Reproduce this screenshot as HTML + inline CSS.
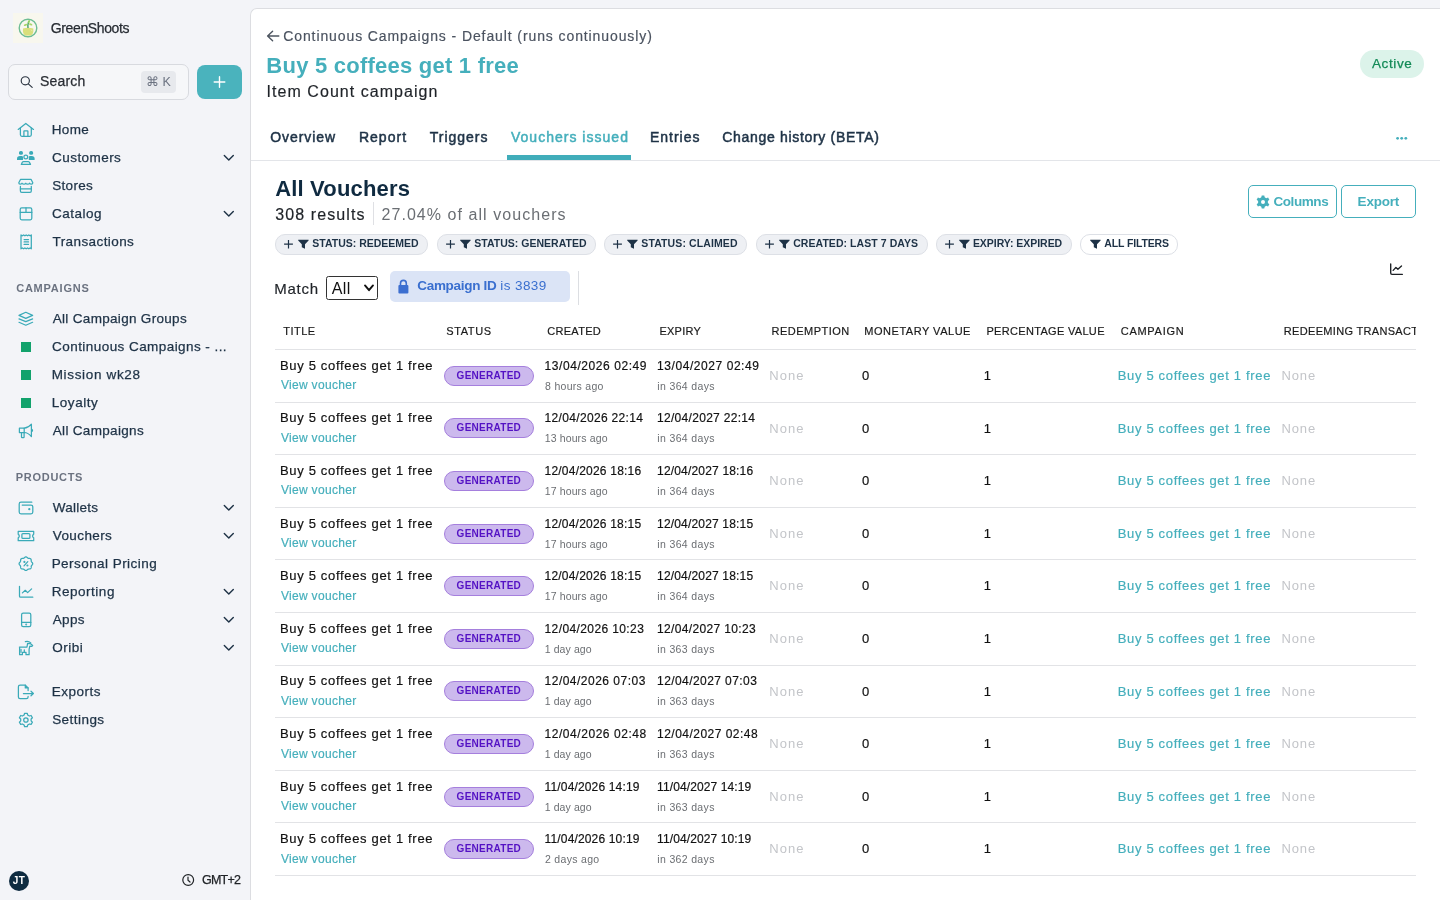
<!DOCTYPE html>
<html><head><meta charset="utf-8"><title>Vouchers issued</title>
<style>
*{box-sizing:border-box;margin:0;padding:0}
html,body{width:1440px;height:900px;overflow:hidden;background:#f3f4f8;font-family:"Liberation Sans",sans-serif}
.t{position:absolute;white-space:nowrap}
.box{position:absolute}
.i{position:absolute;overflow:visible}
.clip{position:absolute;overflow:hidden}
.m{-webkit-text-stroke:0.25px currentColor}
.sb{-webkit-text-stroke:0.5px currentColor}
.m2{-webkit-text-stroke:0.18px currentColor}
.logo{position:absolute;left:13px;top:13px;width:30px;height:30px;background:#f8f7ee}
.logo svg{position:absolute;left:0;top:0}
</style></head><body><div id="root" style="position:absolute;left:0;top:0;width:1440px;height:900px;will-change:transform;background:#f3f4f8">
<div class="logo"><svg width="30" height="30" viewBox="0 0 30 30"><circle cx="15" cy="15" r="8.8" fill="none" stroke="#6dbd92" stroke-width="1.4"/><path d="M10 15.4 Q15 14 20.3 15.4 Q20.9 20.6 17.8 22.6 H12.4 Q9.3 20.6 10 15.4 Z" fill="#d9df7b"/><path d="M15 15 Q14.6 11.5 15.6 8.8" stroke="#3a9a62" stroke-width="1.3" fill="none"/><ellipse cx="12.6" cy="11.9" rx="1.9" ry="1" fill="#a9d66c" transform="rotate(-20 12.6 11.9)"/><ellipse cx="17.7" cy="11.3" rx="1.8" ry="0.95" fill="#a9d66c" transform="rotate(20 17.7 11.3)"/><ellipse cx="15.9" cy="8.7" rx="0.95" ry="1.7" fill="#8fd05e" transform="rotate(25 15.9 8.7)"/><path d="M18 16.6 Q18.8 17.2 19 18.2" stroke="#fff" stroke-width="0.6" fill="none" opacity="0.7"/></svg></div>
<div class="t m" style="left:50.81px;top:21.00px;font-size:14px;line-height:14px;color:#272c33;letter-spacing:-0.381px;">GreenShoots</div>
<div class="box" style="left:8px;top:64px;width:181px;height:36px;border:1px solid #d8dadf;border-radius:7px;background:#f6f7f9"></div>
<svg class="i" style="left:14px;top:70px;" width="24" height="24" viewBox="0 0 24 24"><g fill="none" stroke="#2b3440" stroke-width="1.15" stroke-linecap="round"><circle cx="11.3" cy="10.8" r="4.1"/><path d="M14.3 13.9 L18.2 17.4"/></g></svg>
<div class="t m" style="left:39.98px;top:74.00px;font-size:14px;line-height:14px;color:#2a2e34;letter-spacing:0.177px;">Search</div>
<div class="box" style="left:141px;top:71px;width:35px;height:22px;border-radius:4px;background:#e7e9ed"></div>
<div class="t" style="left:145.95px;top:76.00px;font-size:12.5px;line-height:12.5px;color:#6b7280;">&#8984; K</div>
<div class="box" style="left:197px;top:65px;width:45px;height:34px;border-radius:8px;background:#4ab3bd"></div>
<svg class="i" style="left:207px;top:70px;" width="24" height="24" viewBox="0 0 24 24"><path d="M12.5 6.7 V17.3 M7.2 12 H17.8" stroke="#fff" stroke-width="1.4" stroke-linecap="round"/></svg>
<svg class="i" style="left:14px;top:118px;" width="24" height="24" viewBox="0 0 24 24"><g fill="none" stroke="#3aaab8" stroke-width="1.25" stroke-linecap="round" stroke-linejoin="round"><path d="M4.2 11.4 L11.8 5.4 L19.5 11.4"/><path d="M6.4 10 V16.8 Q6.4 18.3 7.9 18.3 H15.8 Q17.3 18.3 17.3 16.8 V10"/><path d="M9.9 18.3 V13.3 Q9.9 12.9 10.3 12.9 H13.5 Q13.9 12.9 13.9 13.3 V18.3"/></g></svg>
<div class="t m" style="left:51.67px;top:123.00px;font-size:13.5px;line-height:13.5px;color:#1e3246;letter-spacing:0.396px;">Home</div>
<svg class="i" style="left:14px;top:146px;" width="24" height="24" viewBox="0 0 24 24"><g fill="#3aaab8"><rect x="5" y="5" width="3.9" height="3.8" rx="1.6"/><rect x="15.2" y="5" width="3.9" height="3.8" rx="1.6"/><path d="M3 13.9 V12.6 Q3 10.1 6 10.1 H7.6 Q9 10.1 9 11 V13.9 Z"/><path d="M20.6 13.9 V12.6 Q20.6 10.1 17.6 10.1 H16 Q14.8 10.1 14.8 11 V13.9 Z"/></g><g fill="none" stroke="#3aaab8" stroke-width="1.25" stroke-linecap="round" stroke-linejoin="round"><circle cx="11.8" cy="10.9" r="1.9"/><path d="M7.3 18.4 L8.3 16.3 Q8.7 15.6 9.6 15.6 H14.1 Q15 15.6 15.4 16.3 L16.5 18.4 Z"/></g></svg>
<div class="t m" style="left:52.11px;top:151.00px;font-size:13.5px;line-height:13.5px;color:#1e3246;letter-spacing:0.430px;">Customers</div>
<svg class="i" style="left:218px;top:152px;" width="20" height="12" viewBox="0 0 20 12"><path d="M6.3 3.6 L10.8 8.1 L15.3 3.6" fill="none" stroke="#1e3246" stroke-width="1.4" stroke-linecap="round" stroke-linejoin="round"/></svg>
<svg class="i" style="left:14px;top:174px;" width="24" height="24" viewBox="0 0 24 24"><g fill="none" stroke="#3aaab8" stroke-width="1.25" stroke-linecap="round" stroke-linejoin="round"><path d="M6.6 5.3 H17 L18.8 8.8 Q18.8 10.2 17.5 10.2 Q16 10.2 15.6 9.2 Q15 10.2 13.6 10.2 Q12.3 10.2 11.8 9.2 Q11.3 10.2 10 10.2 Q8.6 10.2 8 9.2 Q7.5 10.2 6.1 10.2 Q4.8 10.2 4.8 8.8 Z"/><path d="M6.4 12.4 V17.1 Q6.4 18.4 7.7 18.4 H16 Q17.3 18.4 17.3 17.1 V12.4"/><path d="M6.4 14.9 H17.3"/></g></svg>
<div class="t m" style="left:52.17px;top:179.00px;font-size:13.5px;line-height:13.5px;color:#1e3246;letter-spacing:0.325px;">Stores</div>
<svg class="i" style="left:14px;top:202px;" width="24" height="24" viewBox="0 0 24 24"><g fill="none" stroke="#3aaab8" stroke-width="1.25" stroke-linecap="round" stroke-linejoin="round"><rect x="6.2" y="5.9" width="11.6" height="11.9" rx="1.5"/><path d="M6.2 10.4 H17.8 M12 5.9 V10.4"/></g></svg>
<div class="t m" style="left:52.11px;top:207.00px;font-size:13.5px;line-height:13.5px;color:#1e3246;letter-spacing:0.460px;">Catalog</div>
<svg class="i" style="left:218px;top:208px;" width="20" height="12" viewBox="0 0 20 12"><path d="M6.3 3.6 L10.8 8.1 L15.3 3.6" fill="none" stroke="#1e3246" stroke-width="1.4" stroke-linecap="round" stroke-linejoin="round"/></svg>
<svg class="i" style="left:14px;top:230px;" width="24" height="24" viewBox="0 0 24 24"><g fill="none" stroke="#3aaab8" stroke-width="1.25" stroke-linecap="round" stroke-linejoin="round"><path d="M7 4.9 L8.3 5.8 L9.6 4.9 L10.9 5.8 L12.2 4.9 L13.5 5.8 L14.8 4.9 L16.1 5.8 L17.3 4.9 V18.8 L16.1 17.9 L14.8 18.8 L13.5 17.9 L12.2 18.8 L10.9 17.9 L9.6 18.8 L8.3 17.9 L7 18.8 Z"/><path d="M10.1 9.6 H14.5 M10.1 11.9 H14.5 M10.1 14.4 H14.5"/></g></svg>
<div class="t m" style="left:52.49px;top:235.00px;font-size:13.5px;line-height:13.5px;color:#1e3246;letter-spacing:0.415px;">Transactions</div>
<svg class="i" style="left:14px;top:306px;" width="24" height="24" viewBox="0 0 24 24"><g fill="none" stroke="#3aaab8" stroke-width="1.25" stroke-linecap="round" stroke-linejoin="round"><path d="M11.8 6.3 L18.6 9.4 L11.8 12.4 L5 9.4 Z"/><path d="M5 12.9 L11.8 15.6 L18.6 12.9"/><path d="M5 16.3 L11.8 19.2 L18.6 16.3"/></g></svg>
<div class="t m" style="left:52.74px;top:312.00px;font-size:13.5px;line-height:13.5px;color:#1e3246;letter-spacing:0.314px;">All Campaign Groups</div>
<div class="box" style="left:21px;top:342px;width:10px;height:10px;background:#12a26c"></div>
<div class="t m" style="left:52.11px;top:340.00px;font-size:13.5px;line-height:13.5px;color:#1e3246;letter-spacing:0.435px;">Continuous Campaigns - ...</div>
<div class="box" style="left:21px;top:370px;width:10px;height:10px;background:#12a26c"></div>
<div class="t m" style="left:51.67px;top:368.00px;font-size:13.5px;line-height:13.5px;color:#1e3246;letter-spacing:0.663px;">Mission wk28</div>
<div class="box" style="left:21px;top:398px;width:10px;height:10px;background:#12a26c"></div>
<div class="t m" style="left:51.67px;top:396.00px;font-size:13.5px;line-height:13.5px;color:#1e3246;letter-spacing:0.573px;">Loyalty</div>
<svg class="i" style="left:14px;top:418px;" width="24" height="24" viewBox="0 0 24 24"><g fill="none" stroke="#3aaab8" stroke-width="1.25" stroke-linecap="round" stroke-linejoin="round"><path d="M5.4 10.2 H10.2 Q14.2 10 17.4 6.2 V18.6 Q14.2 14.7 10.2 14.5 H5.4 Z"/><path d="M10.2 10.2 V14.5"/><path d="M7.5 14.5 V18.9 Q7.5 19.5 8.1 19.5 H9.5 Q10.1 19.5 10.1 18.9 V14.5"/><path d="M18 11.5 Q19 12.4 18 13.3"/></g></svg>
<div class="t m" style="left:52.74px;top:424.00px;font-size:13.5px;line-height:13.5px;color:#1e3246;letter-spacing:0.325px;">All Campaigns</div>
<svg class="i" style="left:14px;top:495px;" width="24" height="24" viewBox="0 0 24 24"><g fill="none" stroke="#3aaab8" stroke-width="1.25" stroke-linecap="round" stroke-linejoin="round"><path d="M17.8 7.2 H7 Q5.2 7.2 5.2 9 V17 Q5.2 18.8 7 18.8 H17 Q18.8 18.8 18.8 17 V11.8 Q18.8 10.1 17 10.1 H8.2"/><circle cx="15.3" cy="14.2" r="0.5" fill="#3aaab8"/></g></svg>
<div class="t m" style="left:52.74px;top:501.00px;font-size:13.5px;line-height:13.5px;color:#1e3246;letter-spacing:0.269px;">Wallets</div>
<svg class="i" style="left:218px;top:502px;" width="20" height="12" viewBox="0 0 20 12"><path d="M6.3 3.6 L10.8 8.1 L15.3 3.6" fill="none" stroke="#1e3246" stroke-width="1.4" stroke-linecap="round" stroke-linejoin="round"/></svg>
<svg class="i" style="left:14px;top:523px;" width="24" height="24" viewBox="0 0 24 24"><g fill="none" stroke="#3aaab8" stroke-width="1.25" stroke-linecap="round" stroke-linejoin="round"><path d="M4.2 8.4 H19.7 V11.3 Q18.6 11.7 18.6 13 Q18.6 14.3 19.7 14.8 V17.7 H4.2 V14.8 Q5.3 14.3 5.3 13 Q5.3 11.7 4.2 11.3 Z"/><rect x="7.9" y="10.5" width="8" height="4.9" rx="1"/></g></svg>
<div class="t m" style="left:52.74px;top:529.00px;font-size:13.5px;line-height:13.5px;color:#1e3246;letter-spacing:0.407px;">Vouchers</div>
<svg class="i" style="left:218px;top:530px;" width="20" height="12" viewBox="0 0 20 12"><path d="M6.3 3.6 L10.8 8.1 L15.3 3.6" fill="none" stroke="#1e3246" stroke-width="1.4" stroke-linecap="round" stroke-linejoin="round"/></svg>
<svg class="i" style="left:14px;top:551px;" width="24" height="24" viewBox="0 0 24 24"><g fill="none" stroke="#3aaab8" stroke-width="1.25" stroke-linecap="round" stroke-linejoin="round"><path d="M11.90 5.90 L12.08 5.91 L12.25 5.95 L12.43 6.01 L12.60 6.09 L12.76 6.18 L12.92 6.29 L13.07 6.41 L13.21 6.53 L13.35 6.66 L13.49 6.78 L13.62 6.90 L13.75 7.01 L13.88 7.10 L14.02 7.18 L14.16 7.25 L14.30 7.30 L14.46 7.34 L14.62 7.37 L14.79 7.38 L14.96 7.40 L15.15 7.40 L15.33 7.41 L15.52 7.43 L15.71 7.45 L15.90 7.48 L16.09 7.53 L16.26 7.59 L16.42 7.68 L16.57 7.77 L16.71 7.89 L16.83 8.03 L16.92 8.18 L17.01 8.34 L17.07 8.51 L17.12 8.70 L17.15 8.89 L17.17 9.08 L17.19 9.27 L17.20 9.45 L17.20 9.64 L17.22 9.81 L17.23 9.98 L17.26 10.14 L17.30 10.30 L17.35 10.44 L17.42 10.58 L17.50 10.72 L17.59 10.85 L17.70 10.98 L17.82 11.11 L17.94 11.25 L18.07 11.39 L18.19 11.53 L18.31 11.68 L18.42 11.84 L18.51 12.00 L18.59 12.17 L18.65 12.35 L18.69 12.52 L18.70 12.70 L18.69 12.88 L18.65 13.05 L18.59 13.23 L18.51 13.40 L18.42 13.56 L18.31 13.72 L18.19 13.87 L18.07 14.01 L17.94 14.15 L17.82 14.29 L17.70 14.42 L17.59 14.55 L17.50 14.68 L17.42 14.82 L17.35 14.96 L17.30 15.10 L17.26 15.26 L17.23 15.42 L17.22 15.59 L17.20 15.76 L17.20 15.95 L17.19 16.13 L17.17 16.32 L17.15 16.51 L17.12 16.70 L17.07 16.89 L17.01 17.06 L16.92 17.22 L16.83 17.37 L16.71 17.51 L16.57 17.63 L16.42 17.72 L16.26 17.81 L16.09 17.87 L15.90 17.92 L15.71 17.95 L15.52 17.97 L15.33 17.99 L15.15 18.00 L14.96 18.00 L14.79 18.02 L14.62 18.03 L14.46 18.06 L14.30 18.10 L14.16 18.15 L14.02 18.22 L13.88 18.30 L13.75 18.39 L13.62 18.50 L13.49 18.62 L13.35 18.74 L13.21 18.87 L13.07 18.99 L12.92 19.11 L12.76 19.22 L12.60 19.31 L12.43 19.39 L12.25 19.45 L12.08 19.49 L11.90 19.50 L11.72 19.49 L11.55 19.45 L11.37 19.39 L11.20 19.31 L11.04 19.22 L10.88 19.11 L10.73 18.99 L10.59 18.87 L10.45 18.74 L10.31 18.62 L10.18 18.50 L10.05 18.39 L9.92 18.30 L9.78 18.22 L9.64 18.15 L9.50 18.10 L9.34 18.06 L9.18 18.03 L9.01 18.02 L8.84 18.00 L8.65 18.00 L8.47 17.99 L8.28 17.97 L8.09 17.95 L7.90 17.92 L7.71 17.87 L7.54 17.81 L7.38 17.72 L7.23 17.63 L7.09 17.51 L6.97 17.37 L6.88 17.22 L6.79 17.06 L6.73 16.89 L6.68 16.70 L6.65 16.51 L6.63 16.32 L6.61 16.13 L6.60 15.95 L6.60 15.76 L6.58 15.59 L6.57 15.42 L6.54 15.26 L6.50 15.10 L6.45 14.96 L6.38 14.82 L6.30 14.68 L6.21 14.55 L6.10 14.42 L5.98 14.29 L5.86 14.15 L5.73 14.01 L5.61 13.87 L5.49 13.72 L5.38 13.56 L5.29 13.40 L5.21 13.23 L5.15 13.05 L5.11 12.88 L5.10 12.70 L5.11 12.52 L5.15 12.35 L5.21 12.17 L5.29 12.00 L5.38 11.84 L5.49 11.68 L5.61 11.53 L5.73 11.39 L5.86 11.25 L5.98 11.11 L6.10 10.98 L6.21 10.85 L6.30 10.72 L6.38 10.58 L6.45 10.44 L6.50 10.30 L6.54 10.14 L6.57 9.98 L6.58 9.81 L6.60 9.64 L6.60 9.45 L6.61 9.27 L6.63 9.08 L6.65 8.89 L6.68 8.70 L6.73 8.51 L6.79 8.34 L6.88 8.18 L6.97 8.03 L7.09 7.89 L7.23 7.77 L7.38 7.68 L7.54 7.59 L7.71 7.53 L7.90 7.48 L8.09 7.45 L8.28 7.43 L8.47 7.41 L8.65 7.40 L8.84 7.40 L9.01 7.38 L9.18 7.37 L9.34 7.34 L9.50 7.30 L9.64 7.25 L9.78 7.18 L9.92 7.10 L10.05 7.01 L10.18 6.90 L10.31 6.78 L10.45 6.66 L10.59 6.53 L10.73 6.41 L10.88 6.29 L11.04 6.18 L11.20 6.09 L11.37 6.01 L11.55 5.95 L11.72 5.91 L11.90 5.90Z"/><path d="M10 14.8 L13.8 10.6"/><circle cx="10.4" cy="10.9" r="0.45" fill="#3aaab8"/><circle cx="13.4" cy="14.5" r="0.45" fill="#3aaab8"/></g></svg>
<div class="t m" style="left:51.67px;top:557.00px;font-size:13.5px;line-height:13.5px;color:#1e3246;letter-spacing:0.446px;">Personal Pricing</div>
<svg class="i" style="left:14px;top:579px;" width="24" height="24" viewBox="0 0 24 24"><g fill="none" stroke="#3aaab8" stroke-width="1.25" stroke-linecap="round" stroke-linejoin="round"><path d="M5.5 7.3 V17.2 Q5.5 18.2 6.5 18.2 H18.8"/><path d="M8.4 13.9 L11.3 11.3 L13.6 13.6 L17.6 9.9"/></g></svg>
<div class="t m" style="left:51.67px;top:585.00px;font-size:13.5px;line-height:13.5px;color:#1e3246;letter-spacing:0.525px;">Reporting</div>
<svg class="i" style="left:218px;top:586px;" width="20" height="12" viewBox="0 0 20 12"><path d="M6.3 3.6 L10.8 8.1 L15.3 3.6" fill="none" stroke="#1e3246" stroke-width="1.4" stroke-linecap="round" stroke-linejoin="round"/></svg>
<svg class="i" style="left:14px;top:607px;" width="24" height="24" viewBox="0 0 24 24"><g fill="none" stroke="#3aaab8" stroke-width="1.25" stroke-linecap="round" stroke-linejoin="round"><rect x="7.6" y="6.1" width="9.2" height="13.6" rx="1.6"/><path d="M7.6 15.4 H16.8"/><circle cx="12.2" cy="17.5" r="0.35" fill="#3aaab8"/></g></svg>
<div class="t m" style="left:52.74px;top:613.00px;font-size:13.5px;line-height:13.5px;color:#1e3246;letter-spacing:0.371px;">Apps</div>
<svg class="i" style="left:218px;top:614px;" width="20" height="12" viewBox="0 0 20 12"><path d="M6.3 3.6 L10.8 8.1 L15.3 3.6" fill="none" stroke="#1e3246" stroke-width="1.4" stroke-linecap="round" stroke-linejoin="round"/></svg>
<svg class="i" style="left:14px;top:635px;" width="24" height="24" viewBox="0 0 24 24"><g fill="none" stroke="#3aaab8" stroke-width="1.25" stroke-linecap="round" stroke-linejoin="round"><path d="M11.4 6.7 Q14.2 5.6 16.8 7.9"/><path d="M5.4 12 H13 L13.6 8.4 L16.2 8.6 L18.7 10.4 L17.9 11.3 L15.8 11.2 L15.1 14.3 V19.7 H12 V17.3 H8.4 V19.7 H5.6 V12"/><path d="M7 14.3 V17.3 M10.3 14.8 V17.3"/></g></svg>
<div class="t m" style="left:52.17px;top:641.00px;font-size:13.5px;line-height:13.5px;color:#1e3246;letter-spacing:0.550px;">Oribi</div>
<svg class="i" style="left:218px;top:642px;" width="20" height="12" viewBox="0 0 20 12"><path d="M6.3 3.6 L10.8 8.1 L15.3 3.6" fill="none" stroke="#1e3246" stroke-width="1.4" stroke-linecap="round" stroke-linejoin="round"/></svg>
<svg class="i" style="left:14px;top:679px;" width="24" height="24" viewBox="0 0 24 24"><g fill="none" stroke="#3aaab8" stroke-width="1.25" stroke-linecap="round" stroke-linejoin="round"><path d="M14.1 11.5 V8.9 L11.3 6.1 H6.1 Q4.4 6.1 4.4 7.8 V18 Q4.4 19.7 6.1 19.7 H12.4 Q14.1 19.7 14.1 18 V17.4"/><path d="M11.3 6.1 V8.9 H14.1" fill="#3aaab8"/><path d="M9.4 14.5 H19.4 M17 12.2 L19.4 14.5 L17 16.8"/></g></svg>
<div class="t m" style="left:51.67px;top:685.00px;font-size:13.5px;line-height:13.5px;color:#1e3246;letter-spacing:0.513px;">Exports</div>
<svg class="i" style="left:14px;top:707px;" width="24" height="24" viewBox="0 0 24 24"><g fill="none" stroke="#3aaab8" stroke-width="1.25" stroke-linecap="round" stroke-linejoin="round"><path d="M10.6 6.3 H13.2 L13.7 8 L15.4 9 L17.1 8.5 L18.4 10.8 L17.1 12 V13.9 L18.4 15.2 L17.1 17.4 L15.4 17 L13.7 18 L13.2 19.7 H10.6 L10.1 18 L8.4 17 L6.7 17.4 L5.4 15.2 L6.7 13.9 V12 L5.4 10.8 L6.7 8.5 L8.4 9 L10.1 8 Z"/><circle cx="11.9" cy="13" r="2.2"/></g></svg>
<div class="t m" style="left:52.17px;top:713.00px;font-size:13.5px;line-height:13.5px;color:#1e3246;letter-spacing:0.454px;">Settings</div>
<div class="t" style="left:16.16px;top:283.00px;font-size:11px;line-height:11px;font-weight:bold;color:#6b7280;letter-spacing:0.780px;">CAMPAIGNS</div>
<div class="t" style="left:15.85px;top:472.00px;font-size:11px;line-height:11px;font-weight:bold;color:#6b7280;letter-spacing:0.691px;">PRODUCTS</div>
<div class="box" style="left:9px;top:871px;width:20px;height:20px;border-radius:50%;background:#0e2b40"></div>
<div class="t" style="left:12.81px;top:876.00px;font-size:10px;line-height:10px;font-weight:bold;color:#fff;letter-spacing:0.325px;">JT</div>
<svg class="i" style="left:176px;top:868px;" width="24" height="24" viewBox="0 0 24 24"><g fill="none" stroke="#202327" stroke-width="1.2" stroke-linecap="round"><circle cx="12.2" cy="12" r="5.4"/><path d="M12 9 V12.2 L14 14"/></g></svg>
<div class="t m" style="left:201.88px;top:874.00px;font-size:12.5px;line-height:12.5px;color:#202327;letter-spacing:-0.712px;">GMT+2</div>
<div class="box" style="left:250px;top:8px;width:1200px;height:900px;background:#fff;border-left:1px solid #dcdde1;border-top:1px solid #dcdde1;border-top-left-radius:7px"></div>
<svg class="i" style="left:264px;top:28px;" width="18" height="16" viewBox="0 0 18 16"><path d="M14.8 8 H3.6 M8.6 3.2 L3.6 8 L8.6 12.8" fill="none" stroke="#4d5560" stroke-width="1.4" stroke-linecap="round" stroke-linejoin="round"/></svg>
<div class="t m2" style="left:283.21px;top:29.00px;font-size:14px;line-height:14px;color:#4b5360;letter-spacing:0.901px;">Continuous Campaigns - Default (runs continuously)</div>
<div class="t" style="left:266.36px;top:55.00px;font-size:22px;line-height:22px;font-weight:bold;color:#45afbc;letter-spacing:0.234px;">Buy 5 coffees get 1 free</div>
<div class="t m2" style="left:266.60px;top:84.00px;font-size:16px;line-height:16px;color:#1f2328;letter-spacing:1.041px;">Item Count campaign</div>
<div class="box" style="left:1360px;top:50px;width:64px;height:28px;border-radius:14px;background:#dcf3ea"></div>
<div class="t m" style="left:1371.94px;top:57.00px;font-size:13.5px;line-height:13.5px;color:#138a57;letter-spacing:0.635px;">Active</div>
<div class="t sb" style="left:270.31px;top:130.00px;font-size:14px;line-height:14px;color:#1e3246;letter-spacing:0.930px;">Overview</div>
<div class="t sb" style="left:358.88px;top:130.00px;font-size:14px;line-height:14px;color:#1e3246;letter-spacing:1.038px;">Report</div>
<div class="t sb" style="left:429.69px;top:130.00px;font-size:14px;line-height:14px;color:#1e3246;letter-spacing:1.000px;">Triggers</div>
<div class="t sb" style="left:510.94px;top:130.00px;font-size:14px;line-height:14px;color:#45afbc;letter-spacing:1.018px;">Vouchers issued</div>
<div class="t sb" style="left:649.88px;top:130.00px;font-size:14px;line-height:14px;color:#1e3246;letter-spacing:1.010px;">Entries</div>
<div class="t sb" style="left:722.31px;top:130.00px;font-size:14px;line-height:14px;color:#1e3246;letter-spacing:0.681px;">Change history (BETA)</div>
<div class="box" style="left:507px;top:155px;width:124px;height:5px;background:#40adba"></div>
<div class="box" style="left:251px;top:160px;width:1189px;height:1px;background:#e3e5e9"></div>
<svg class="i" style="left:1390px;top:131px;" width="22" height="14" viewBox="0 0 22 14"><g fill="#45afbc"><circle cx="7.6" cy="7.3" r="1.4"/><circle cx="11.7" cy="7.3" r="1.4"/><circle cx="15.8" cy="7.3" r="1.4"/></g></svg>
<div class="t" style="left:275.14px;top:178.00px;font-size:22px;line-height:22px;font-weight:bold;color:#0f2a40;letter-spacing:0.175px;">All Vouchers</div>
<div class="t m2" style="left:275.18px;top:207.00px;font-size:16px;line-height:16px;color:#1f2328;letter-spacing:1.104px;">308 results</div>
<div class="box" style="left:373px;top:202px;width:1px;height:23px;background:#dfe0e4"></div>
<div class="t" style="left:381.49px;top:207.00px;font-size:16px;line-height:16px;color:#6a6e73;letter-spacing:1.057px;">27.04% of all vouchers</div>
<div class="box" style="left:275px;top:234px;width:153.0px;height:21px;border:1px solid #dde0e6;border-radius:10px;background:#eef0f4"></div>
<svg class="i" style="left:283px;top:237px;" width="12" height="14" viewBox="0 0 12 14"><path d="M5.5 2.9 V11.5 M1.1 7.2 H9.9" stroke="#1e3246" stroke-width="1.2"/></svg>
<svg class="i" style="left:297.7px;top:237px;" width="12" height="14" viewBox="0 0 12 14"><path d="M0.2 2.7 H10.6 V3.5 L7 7.3 V11.8 L3.8 10.3 V7.3 L0.2 3.5 Z" fill="#1e3246"/></svg>
<div class="t" style="left:312.29px;top:238.00px;font-size:10.5px;line-height:10.5px;font-weight:bold;color:#1e3246;">STATUS: REDEEMED</div>
<div class="box" style="left:437px;top:234px;width:159.0px;height:21px;border:1px solid #dde0e6;border-radius:10px;background:#eef0f4"></div>
<svg class="i" style="left:445px;top:237px;" width="12" height="14" viewBox="0 0 12 14"><path d="M5.5 2.9 V11.5 M1.1 7.2 H9.9" stroke="#1e3246" stroke-width="1.2"/></svg>
<svg class="i" style="left:459.7px;top:237px;" width="12" height="14" viewBox="0 0 12 14"><path d="M0.2 2.7 H10.6 V3.5 L7 7.3 V11.8 L3.8 10.3 V7.3 L0.2 3.5 Z" fill="#1e3246"/></svg>
<div class="t" style="left:474.29px;top:238.00px;font-size:10.5px;line-height:10.5px;font-weight:bold;color:#1e3246;letter-spacing:0.016px;">STATUS: GENERATED</div>
<div class="box" style="left:604px;top:234px;width:143.0px;height:21px;border:1px solid #dde0e6;border-radius:10px;background:#eef0f4"></div>
<svg class="i" style="left:612px;top:237px;" width="12" height="14" viewBox="0 0 12 14"><path d="M5.5 2.9 V11.5 M1.1 7.2 H9.9" stroke="#1e3246" stroke-width="1.2"/></svg>
<svg class="i" style="left:626.7px;top:237px;" width="12" height="14" viewBox="0 0 12 14"><path d="M0.2 2.7 H10.6 V3.5 L7 7.3 V11.8 L3.8 10.3 V7.3 L0.2 3.5 Z" fill="#1e3246"/></svg>
<div class="t" style="left:641.29px;top:238.00px;font-size:10.5px;line-height:10.5px;font-weight:bold;color:#1e3246;letter-spacing:0.112px;">STATUS: CLAIMED</div>
<div class="box" style="left:756px;top:234px;width:171.6px;height:21px;border:1px solid #dde0e6;border-radius:10px;background:#eef0f4"></div>
<svg class="i" style="left:764px;top:237px;" width="12" height="14" viewBox="0 0 12 14"><path d="M5.5 2.9 V11.5 M1.1 7.2 H9.9" stroke="#1e3246" stroke-width="1.2"/></svg>
<svg class="i" style="left:778.7px;top:237px;" width="12" height="14" viewBox="0 0 12 14"><path d="M0.2 2.7 H10.6 V3.5 L7 7.3 V11.8 L3.8 10.3 V7.3 L0.2 3.5 Z" fill="#1e3246"/></svg>
<div class="t" style="left:793.16px;top:238.00px;font-size:10.5px;line-height:10.5px;font-weight:bold;color:#1e3246;letter-spacing:0.064px;">CREATED: LAST 7 DAYS</div>
<div class="box" style="left:936px;top:234px;width:135.6px;height:21px;border:1px solid #dde0e6;border-radius:10px;background:#eef0f4"></div>
<svg class="i" style="left:944px;top:237px;" width="12" height="14" viewBox="0 0 12 14"><path d="M5.5 2.9 V11.5 M1.1 7.2 H9.9" stroke="#1e3246" stroke-width="1.2"/></svg>
<svg class="i" style="left:958.7px;top:237px;" width="12" height="14" viewBox="0 0 12 14"><path d="M0.2 2.7 H10.6 V3.5 L7 7.3 V11.8 L3.8 10.3 V7.3 L0.2 3.5 Z" fill="#1e3246"/></svg>
<div class="t" style="left:972.91px;top:238.00px;font-size:10.5px;line-height:10.5px;font-weight:bold;color:#1e3246;letter-spacing:-0.042px;">EXPIRY: EXPIRED</div>
<div class="box" style="left:1080.3px;top:234px;width:98.2px;height:21px;border:1px solid #dde0e6;border-radius:10px;background:#fff"></div>
<svg class="i" style="left:1089.7px;top:237px;" width="12" height="14" viewBox="0 0 12 14"><path d="M0.2 2.7 H10.6 V3.5 L7 7.3 V11.8 L3.8 10.3 V7.3 L0.2 3.5 Z" fill="#1e3246"/></svg>
<div class="t" style="left:1104.35px;top:238.00px;font-size:10.5px;line-height:10.5px;font-weight:bold;color:#1e3246;letter-spacing:-0.150px;">ALL FILTERS</div>
<div class="box" style="left:1248px;top:185px;width:89px;height:33px;border:1px solid #45afbc;border-radius:5px"></div>
<svg class="i" style="left:1255px;top:193.5px;" width="16" height="16" viewBox="0 0 16 16"><g fill="#45afbc" transform="translate(8 8) scale(1.06) translate(-8 -8)"><path d="M6.8 1.8 H9.2 L9.6 3.6 L11 4.4 L12.8 3.8 L14 5.9 L12.6 7.1 V8.9 L14 10.1 L12.8 12.2 L11 11.6 L9.6 12.4 L9.2 14.2 H6.8 L6.4 12.4 L5 11.6 L3.2 12.2 L2 10.1 L3.4 8.9 V7.1 L2 5.9 L3.2 3.8 L5 4.4 L6.4 3.6 Z"/></g><circle cx="8" cy="8" r="2" fill="#fff"/></svg>
<div class="t" style="left:1273.44px;top:195.00px;font-size:13.5px;line-height:13.5px;font-weight:bold;color:#45afbc;letter-spacing:-0.421px;">Columns</div>
<div class="box" style="left:1341px;top:185px;width:75px;height:33px;border:1px solid #45afbc;border-radius:5px"></div>
<div class="t" style="left:1357.62px;top:195.00px;font-size:13.5px;line-height:13.5px;font-weight:bold;color:#45afbc;letter-spacing:-0.237px;">Export</div>
<svg class="i" style="left:1386px;top:259px;" width="20" height="20" viewBox="0 0 20 20"><g fill="none" stroke="#1b1f24" stroke-width="1.35" stroke-linecap="round" stroke-linejoin="round"><path d="M4.7 5 V14 Q4.7 15.3 6 15.3 H16.4"/><path d="M7.2 11.4 L9.9 8.4 L11.9 10.3 L15.5 7"/></g></svg>
<div class="t m2" style="left:274.35px;top:281.00px;font-size:15px;line-height:15px;color:#1f2328;letter-spacing:0.719px;">Match</div>
<div class="box" style="left:326px;top:276px;width:52px;height:24px;border:1px solid #333;border-radius:2.5px;background:#fff"></div>
<div class="t" style="left:331.74px;top:281.00px;font-size:16px;line-height:16px;color:#111;letter-spacing:0.406px;">All</div>
<svg class="i" style="left:363px;top:282px;" width="12" height="12" viewBox="0 0 12 12"><path d="M2 3.4 L6 8.2 L10 3.4" fill="none" stroke="#111" stroke-width="1.9" stroke-linecap="round" stroke-linejoin="round"/></svg>
<div class="box" style="left:390px;top:271px;width:180px;height:31px;border-radius:5px;background:#dbe4f6"></div>
<svg class="i" style="left:395px;top:277px;" width="16" height="18" viewBox="0 0 16 18"><g fill="#3c6fd0"><rect x="3.4" y="8" width="10" height="8.4" rx="1"/><path d="M5.5 8.2 V6.2 Q5.5 3.4 8.4 3.4 Q11.3 3.4 11.3 6.2 V8.2" fill="none" stroke="#3c6fd0" stroke-width="1.6"/></g></svg>
<div class="t" style="left:417.24px;top:279.00px;font-size:13.5px;line-height:13.5px;font-weight:bold;color:#3a6fcf;letter-spacing:-0.298px;">Campaign ID</div>
<div class="t" style="left:500.23px;top:279.00px;font-size:13.5px;line-height:13.5px;color:#3a6fcf;letter-spacing:0.417px;">is 3839</div>
<div class="box" style="left:578px;top:271px;width:1px;height:34px;background:#dcdee2"></div>
<div class="t m2" style="left:283.25px;top:326.00px;font-size:11px;line-height:11px;color:#1a1a1a;letter-spacing:0.487px;">TITLE</div>
<div class="t m2" style="left:446.30px;top:326.00px;font-size:11px;line-height:11px;color:#1a1a1a;letter-spacing:0.590px;">STATUS</div>
<div class="t m2" style="left:547.14px;top:326.00px;font-size:11px;line-height:11px;color:#1a1a1a;letter-spacing:0.319px;">CREATED</div>
<div class="t m2" style="left:659.42px;top:326.00px;font-size:11px;line-height:11px;color:#1a1a1a;letter-spacing:0.260px;">EXPIRY</div>
<div class="t m2" style="left:771.62px;top:326.00px;font-size:11px;line-height:11px;color:#1a1a1a;letter-spacing:0.471px;">REDEMPTION</div>
<div class="t m2" style="left:864.33px;top:326.00px;font-size:11px;line-height:11px;color:#1a1a1a;letter-spacing:0.513px;">MONETARY VALUE</div>
<div class="t m2" style="left:986.42px;top:326.00px;font-size:11px;line-height:11px;color:#1a1a1a;letter-spacing:0.318px;">PERCENTAGE VALUE</div>
<div class="t m2" style="left:1120.74px;top:326.00px;font-size:11px;line-height:11px;color:#1a1a1a;letter-spacing:0.723px;">CAMPAIGN</div>
<div class="clip" style="left:1270px;top:320px;width:146px;height:20px"><div class="t m2" style="left:13.82px;top:6.00px;font-size:11px;line-height:11px;color:#1a1a1a;letter-spacing:0.320px;">REDEEMING TRANSACTION</div></div>
<div class="box" style="left:275px;top:349px;width:1141px;height:1px;background:#e2e3e6"></div>
<div class="t m2" style="left:279.94px;top:359.00px;font-size:13px;line-height:13px;color:#111;letter-spacing:0.674px;">Buy 5 coffees get 1 free</div>
<div class="t m2" style="left:280.94px;top:379.00px;font-size:12px;line-height:12px;color:#45afbc;letter-spacing:0.312px;">View voucher</div>
<div class="box" style="left:444px;top:366px;width:90px;height:20px;border:1px solid #a57fdd;border-radius:10px;background:#ccb9ed"></div>
<div class="t" style="left:456.62px;top:371.00px;font-size:10px;line-height:10px;font-weight:bold;color:#5412c4;letter-spacing:0.269px;">GENERATED</div>
<div class="t m2" style="left:544.56px;top:360.00px;font-size:12px;line-height:12px;color:#111;letter-spacing:0.571px;">13/04/2026 02:49</div>
<div class="t" style="left:545.06px;top:381.00px;font-size:10.5px;line-height:10.5px;color:#6b6e72;letter-spacing:0.294px;">8 hours ago</div>
<div class="t m2" style="left:657.06px;top:360.00px;font-size:12px;line-height:12px;color:#111;letter-spacing:0.564px;">13/04/2027 02:49</div>
<div class="t" style="left:657.31px;top:381.00px;font-size:10.5px;line-height:10.5px;color:#6b6e72;letter-spacing:0.358px;">in 364 days</div>
<div class="t" style="left:769.24px;top:369.00px;font-size:13px;line-height:13px;color:#c3c5c9;letter-spacing:1.067px;">None</div>
<div class="t m2" style="left:862.00px;top:369.00px;font-size:13px;line-height:13px;color:#111;">0</div>
<div class="t m2" style="left:983.70px;top:369.00px;font-size:13px;line-height:13px;color:#111;">1</div>
<div class="t m2" style="left:1117.64px;top:369.00px;font-size:13px;line-height:13px;color:#45afbc;letter-spacing:0.687px;">Buy 5 coffees get 1 free</div>
<div class="t" style="left:1281.44px;top:369.00px;font-size:13px;line-height:13px;color:#c3c5c9;letter-spacing:0.900px;">None</div>
<div class="box" style="left:275px;top:402px;width:1141px;height:1px;background:#e2e3e6"></div>
<div class="t m2" style="left:279.94px;top:411.00px;font-size:13px;line-height:13px;color:#111;letter-spacing:0.674px;">Buy 5 coffees get 1 free</div>
<div class="t m2" style="left:280.94px;top:432.00px;font-size:12px;line-height:12px;color:#45afbc;letter-spacing:0.312px;">View voucher</div>
<div class="box" style="left:444px;top:418px;width:90px;height:20px;border:1px solid #a57fdd;border-radius:10px;background:#ccb9ed"></div>
<div class="t" style="left:456.62px;top:423.00px;font-size:10px;line-height:10px;font-weight:bold;color:#5412c4;letter-spacing:0.269px;">GENERATED</div>
<div class="t m2" style="left:544.56px;top:412.00px;font-size:12px;line-height:12px;color:#111;letter-spacing:0.332px;">12/04/2026 22:14</div>
<div class="t" style="left:544.69px;top:433.00px;font-size:10.5px;line-height:10.5px;color:#6b6e72;letter-spacing:0.136px;">13 hours ago</div>
<div class="t m2" style="left:657.06px;top:412.00px;font-size:12px;line-height:12px;color:#111;letter-spacing:0.298px;">12/04/2027 22:14</div>
<div class="t" style="left:657.31px;top:433.00px;font-size:10.5px;line-height:10.5px;color:#6b6e72;letter-spacing:0.358px;">in 364 days</div>
<div class="t" style="left:769.24px;top:422.00px;font-size:13px;line-height:13px;color:#c3c5c9;letter-spacing:1.067px;">None</div>
<div class="t m2" style="left:862.00px;top:422.00px;font-size:13px;line-height:13px;color:#111;">0</div>
<div class="t m2" style="left:983.70px;top:422.00px;font-size:13px;line-height:13px;color:#111;">1</div>
<div class="t m2" style="left:1117.64px;top:422.00px;font-size:13px;line-height:13px;color:#45afbc;letter-spacing:0.687px;">Buy 5 coffees get 1 free</div>
<div class="t" style="left:1281.44px;top:422.00px;font-size:13px;line-height:13px;color:#c3c5c9;letter-spacing:0.900px;">None</div>
<div class="box" style="left:275px;top:454px;width:1141px;height:1px;background:#e2e3e6"></div>
<div class="t m2" style="left:279.94px;top:464.00px;font-size:13px;line-height:13px;color:#111;letter-spacing:0.674px;">Buy 5 coffees get 1 free</div>
<div class="t m2" style="left:280.94px;top:484.00px;font-size:12px;line-height:12px;color:#45afbc;letter-spacing:0.312px;">View voucher</div>
<div class="box" style="left:444px;top:471px;width:90px;height:20px;border:1px solid #a57fdd;border-radius:10px;background:#ccb9ed"></div>
<div class="t" style="left:456.62px;top:476.00px;font-size:10px;line-height:10px;font-weight:bold;color:#5412c4;letter-spacing:0.269px;">GENERATED</div>
<div class="t m2" style="left:544.56px;top:465.00px;font-size:12px;line-height:12px;color:#111;letter-spacing:0.211px;">12/04/2026 18:16</div>
<div class="t" style="left:544.69px;top:486.00px;font-size:10.5px;line-height:10.5px;color:#6b6e72;letter-spacing:0.136px;">17 hours ago</div>
<div class="t m2" style="left:657.06px;top:465.00px;font-size:12px;line-height:12px;color:#111;letter-spacing:0.178px;">12/04/2027 18:16</div>
<div class="t" style="left:657.31px;top:486.00px;font-size:10.5px;line-height:10.5px;color:#6b6e72;letter-spacing:0.358px;">in 364 days</div>
<div class="t" style="left:769.24px;top:474.00px;font-size:13px;line-height:13px;color:#c3c5c9;letter-spacing:1.067px;">None</div>
<div class="t m2" style="left:862.00px;top:474.00px;font-size:13px;line-height:13px;color:#111;">0</div>
<div class="t m2" style="left:983.70px;top:474.00px;font-size:13px;line-height:13px;color:#111;">1</div>
<div class="t m2" style="left:1117.64px;top:474.00px;font-size:13px;line-height:13px;color:#45afbc;letter-spacing:0.687px;">Buy 5 coffees get 1 free</div>
<div class="t" style="left:1281.44px;top:474.00px;font-size:13px;line-height:13px;color:#c3c5c9;letter-spacing:0.900px;">None</div>
<div class="box" style="left:275px;top:507px;width:1141px;height:1px;background:#e2e3e6"></div>
<div class="t m2" style="left:279.94px;top:517.00px;font-size:13px;line-height:13px;color:#111;letter-spacing:0.674px;">Buy 5 coffees get 1 free</div>
<div class="t m2" style="left:280.94px;top:537.00px;font-size:12px;line-height:12px;color:#45afbc;letter-spacing:0.312px;">View voucher</div>
<div class="box" style="left:444px;top:524px;width:90px;height:20px;border:1px solid #a57fdd;border-radius:10px;background:#ccb9ed"></div>
<div class="t" style="left:456.62px;top:529.00px;font-size:10px;line-height:10px;font-weight:bold;color:#5412c4;letter-spacing:0.269px;">GENERATED</div>
<div class="t m2" style="left:544.56px;top:518.00px;font-size:12px;line-height:12px;color:#111;letter-spacing:0.207px;">12/04/2026 18:15</div>
<div class="t" style="left:544.69px;top:539.00px;font-size:10.5px;line-height:10.5px;color:#6b6e72;letter-spacing:0.136px;">17 hours ago</div>
<div class="t m2" style="left:657.06px;top:518.00px;font-size:12px;line-height:12px;color:#111;letter-spacing:0.173px;">12/04/2027 18:15</div>
<div class="t" style="left:657.31px;top:539.00px;font-size:10.5px;line-height:10.5px;color:#6b6e72;letter-spacing:0.358px;">in 364 days</div>
<div class="t" style="left:769.24px;top:527.00px;font-size:13px;line-height:13px;color:#c3c5c9;letter-spacing:1.067px;">None</div>
<div class="t m2" style="left:862.00px;top:527.00px;font-size:13px;line-height:13px;color:#111;">0</div>
<div class="t m2" style="left:983.70px;top:527.00px;font-size:13px;line-height:13px;color:#111;">1</div>
<div class="t m2" style="left:1117.64px;top:527.00px;font-size:13px;line-height:13px;color:#45afbc;letter-spacing:0.687px;">Buy 5 coffees get 1 free</div>
<div class="t" style="left:1281.44px;top:527.00px;font-size:13px;line-height:13px;color:#c3c5c9;letter-spacing:0.900px;">None</div>
<div class="box" style="left:275px;top:559px;width:1141px;height:1px;background:#e2e3e6"></div>
<div class="t m2" style="left:279.94px;top:569.00px;font-size:13px;line-height:13px;color:#111;letter-spacing:0.674px;">Buy 5 coffees get 1 free</div>
<div class="t m2" style="left:280.94px;top:590.00px;font-size:12px;line-height:12px;color:#45afbc;letter-spacing:0.312px;">View voucher</div>
<div class="box" style="left:444px;top:576px;width:90px;height:20px;border:1px solid #a57fdd;border-radius:10px;background:#ccb9ed"></div>
<div class="t" style="left:456.62px;top:581.00px;font-size:10px;line-height:10px;font-weight:bold;color:#5412c4;letter-spacing:0.269px;">GENERATED</div>
<div class="t m2" style="left:544.56px;top:570.00px;font-size:12px;line-height:12px;color:#111;letter-spacing:0.207px;">12/04/2026 18:15</div>
<div class="t" style="left:544.69px;top:591.00px;font-size:10.5px;line-height:10.5px;color:#6b6e72;letter-spacing:0.136px;">17 hours ago</div>
<div class="t m2" style="left:657.06px;top:570.00px;font-size:12px;line-height:12px;color:#111;letter-spacing:0.173px;">12/04/2027 18:15</div>
<div class="t" style="left:657.31px;top:591.00px;font-size:10.5px;line-height:10.5px;color:#6b6e72;letter-spacing:0.358px;">in 364 days</div>
<div class="t" style="left:769.24px;top:579.00px;font-size:13px;line-height:13px;color:#c3c5c9;letter-spacing:1.067px;">None</div>
<div class="t m2" style="left:862.00px;top:579.00px;font-size:13px;line-height:13px;color:#111;">0</div>
<div class="t m2" style="left:983.70px;top:579.00px;font-size:13px;line-height:13px;color:#111;">1</div>
<div class="t m2" style="left:1117.64px;top:579.00px;font-size:13px;line-height:13px;color:#45afbc;letter-spacing:0.687px;">Buy 5 coffees get 1 free</div>
<div class="t" style="left:1281.44px;top:579.00px;font-size:13px;line-height:13px;color:#c3c5c9;letter-spacing:0.900px;">None</div>
<div class="box" style="left:275px;top:612px;width:1141px;height:1px;background:#e2e3e6"></div>
<div class="t m2" style="left:279.94px;top:622.00px;font-size:13px;line-height:13px;color:#111;letter-spacing:0.674px;">Buy 5 coffees get 1 free</div>
<div class="t m2" style="left:280.94px;top:642.00px;font-size:12px;line-height:12px;color:#45afbc;letter-spacing:0.312px;">View voucher</div>
<div class="box" style="left:444px;top:629px;width:90px;height:20px;border:1px solid #a57fdd;border-radius:10px;background:#ccb9ed"></div>
<div class="t" style="left:456.62px;top:634.00px;font-size:10px;line-height:10px;font-weight:bold;color:#5412c4;letter-spacing:0.269px;">GENERATED</div>
<div class="t m2" style="left:544.56px;top:623.00px;font-size:12px;line-height:12px;color:#111;letter-spacing:0.391px;">12/04/2026 10:23</div>
<div class="t" style="left:544.69px;top:644.00px;font-size:10.5px;line-height:10.5px;color:#6b6e72;letter-spacing:0.103px;">1 day ago</div>
<div class="t m2" style="left:657.06px;top:623.00px;font-size:12px;line-height:12px;color:#111;letter-spacing:0.344px;">12/04/2027 10:23</div>
<div class="t" style="left:657.31px;top:644.00px;font-size:10.5px;line-height:10.5px;color:#6b6e72;letter-spacing:0.338px;">in 363 days</div>
<div class="t" style="left:769.24px;top:632.00px;font-size:13px;line-height:13px;color:#c3c5c9;letter-spacing:1.067px;">None</div>
<div class="t m2" style="left:862.00px;top:632.00px;font-size:13px;line-height:13px;color:#111;">0</div>
<div class="t m2" style="left:983.70px;top:632.00px;font-size:13px;line-height:13px;color:#111;">1</div>
<div class="t m2" style="left:1117.64px;top:632.00px;font-size:13px;line-height:13px;color:#45afbc;letter-spacing:0.687px;">Buy 5 coffees get 1 free</div>
<div class="t" style="left:1281.44px;top:632.00px;font-size:13px;line-height:13px;color:#c3c5c9;letter-spacing:0.900px;">None</div>
<div class="box" style="left:275px;top:665px;width:1141px;height:1px;background:#e2e3e6"></div>
<div class="t m2" style="left:279.94px;top:674.00px;font-size:13px;line-height:13px;color:#111;letter-spacing:0.674px;">Buy 5 coffees get 1 free</div>
<div class="t m2" style="left:280.94px;top:695.00px;font-size:12px;line-height:12px;color:#45afbc;letter-spacing:0.312px;">View voucher</div>
<div class="box" style="left:444px;top:681px;width:90px;height:20px;border:1px solid #a57fdd;border-radius:10px;background:#ccb9ed"></div>
<div class="t" style="left:456.62px;top:686.00px;font-size:10px;line-height:10px;font-weight:bold;color:#5412c4;letter-spacing:0.269px;">GENERATED</div>
<div class="t m2" style="left:544.56px;top:675.00px;font-size:12px;line-height:12px;color:#111;letter-spacing:0.491px;">12/04/2026 07:03</div>
<div class="t" style="left:544.69px;top:696.00px;font-size:10.5px;line-height:10.5px;color:#6b6e72;letter-spacing:0.103px;">1 day ago</div>
<div class="t m2" style="left:657.06px;top:675.00px;font-size:12px;line-height:12px;color:#111;letter-spacing:0.424px;">12/04/2027 07:03</div>
<div class="t" style="left:657.31px;top:696.00px;font-size:10.5px;line-height:10.5px;color:#6b6e72;letter-spacing:0.338px;">in 363 days</div>
<div class="t" style="left:769.24px;top:685.00px;font-size:13px;line-height:13px;color:#c3c5c9;letter-spacing:1.067px;">None</div>
<div class="t m2" style="left:862.00px;top:685.00px;font-size:13px;line-height:13px;color:#111;">0</div>
<div class="t m2" style="left:983.70px;top:685.00px;font-size:13px;line-height:13px;color:#111;">1</div>
<div class="t m2" style="left:1117.64px;top:685.00px;font-size:13px;line-height:13px;color:#45afbc;letter-spacing:0.687px;">Buy 5 coffees get 1 free</div>
<div class="t" style="left:1281.44px;top:685.00px;font-size:13px;line-height:13px;color:#c3c5c9;letter-spacing:0.900px;">None</div>
<div class="box" style="left:275px;top:717px;width:1141px;height:1px;background:#e2e3e6"></div>
<div class="t m2" style="left:279.94px;top:727.00px;font-size:13px;line-height:13px;color:#111;letter-spacing:0.674px;">Buy 5 coffees get 1 free</div>
<div class="t m2" style="left:280.94px;top:748.00px;font-size:12px;line-height:12px;color:#45afbc;letter-spacing:0.312px;">View voucher</div>
<div class="box" style="left:444px;top:734px;width:90px;height:20px;border:1px solid #a57fdd;border-radius:10px;background:#ccb9ed"></div>
<div class="t" style="left:456.62px;top:739.00px;font-size:10px;line-height:10px;font-weight:bold;color:#5412c4;letter-spacing:0.269px;">GENERATED</div>
<div class="t m2" style="left:544.56px;top:728.00px;font-size:12px;line-height:12px;color:#111;letter-spacing:0.547px;">12/04/2026 02:48</div>
<div class="t" style="left:544.69px;top:749.00px;font-size:10.5px;line-height:10.5px;color:#6b6e72;letter-spacing:0.103px;">1 day ago</div>
<div class="t m2" style="left:657.06px;top:728.00px;font-size:12px;line-height:12px;color:#111;letter-spacing:0.480px;">12/04/2027 02:48</div>
<div class="t" style="left:657.31px;top:749.00px;font-size:10.5px;line-height:10.5px;color:#6b6e72;letter-spacing:0.338px;">in 363 days</div>
<div class="t" style="left:769.24px;top:737.00px;font-size:13px;line-height:13px;color:#c3c5c9;letter-spacing:1.067px;">None</div>
<div class="t m2" style="left:862.00px;top:737.00px;font-size:13px;line-height:13px;color:#111;">0</div>
<div class="t m2" style="left:983.70px;top:737.00px;font-size:13px;line-height:13px;color:#111;">1</div>
<div class="t m2" style="left:1117.64px;top:737.00px;font-size:13px;line-height:13px;color:#45afbc;letter-spacing:0.687px;">Buy 5 coffees get 1 free</div>
<div class="t" style="left:1281.44px;top:737.00px;font-size:13px;line-height:13px;color:#c3c5c9;letter-spacing:0.900px;">None</div>
<div class="box" style="left:275px;top:770px;width:1141px;height:1px;background:#e2e3e6"></div>
<div class="t m2" style="left:279.94px;top:780.00px;font-size:13px;line-height:13px;color:#111;letter-spacing:0.674px;">Buy 5 coffees get 1 free</div>
<div class="t m2" style="left:280.94px;top:800.00px;font-size:12px;line-height:12px;color:#45afbc;letter-spacing:0.312px;">View voucher</div>
<div class="box" style="left:444px;top:787px;width:90px;height:20px;border:1px solid #a57fdd;border-radius:10px;background:#ccb9ed"></div>
<div class="t" style="left:456.62px;top:792.00px;font-size:10px;line-height:10px;font-weight:bold;color:#5412c4;letter-spacing:0.269px;">GENERATED</div>
<div class="t m2" style="left:544.56px;top:781.00px;font-size:12px;line-height:12px;color:#111;letter-spacing:0.156px;">11/04/2026 14:19</div>
<div class="t" style="left:544.69px;top:802.00px;font-size:10.5px;line-height:10.5px;color:#6b6e72;letter-spacing:0.103px;">1 day ago</div>
<div class="t m2" style="left:657.06px;top:781.00px;font-size:12px;line-height:12px;color:#111;letter-spacing:0.109px;">11/04/2027 14:19</div>
<div class="t" style="left:657.31px;top:802.00px;font-size:10.5px;line-height:10.5px;color:#6b6e72;letter-spacing:0.338px;">in 363 days</div>
<div class="t" style="left:769.24px;top:790.00px;font-size:13px;line-height:13px;color:#c3c5c9;letter-spacing:1.067px;">None</div>
<div class="t m2" style="left:862.00px;top:790.00px;font-size:13px;line-height:13px;color:#111;">0</div>
<div class="t m2" style="left:983.70px;top:790.00px;font-size:13px;line-height:13px;color:#111;">1</div>
<div class="t m2" style="left:1117.64px;top:790.00px;font-size:13px;line-height:13px;color:#45afbc;letter-spacing:0.687px;">Buy 5 coffees get 1 free</div>
<div class="t" style="left:1281.44px;top:790.00px;font-size:13px;line-height:13px;color:#c3c5c9;letter-spacing:0.900px;">None</div>
<div class="box" style="left:275px;top:822px;width:1141px;height:1px;background:#e2e3e6"></div>
<div class="t m2" style="left:279.94px;top:832.00px;font-size:13px;line-height:13px;color:#111;letter-spacing:0.674px;">Buy 5 coffees get 1 free</div>
<div class="t m2" style="left:280.94px;top:853.00px;font-size:12px;line-height:12px;color:#45afbc;letter-spacing:0.312px;">View voucher</div>
<div class="box" style="left:444px;top:839px;width:90px;height:20px;border:1px solid #a57fdd;border-radius:10px;background:#ccb9ed"></div>
<div class="t" style="left:456.62px;top:844.00px;font-size:10px;line-height:10px;font-weight:bold;color:#5412c4;letter-spacing:0.269px;">GENERATED</div>
<div class="t m2" style="left:544.56px;top:833.00px;font-size:12px;line-height:12px;color:#111;letter-spacing:0.156px;">11/04/2026 10:19</div>
<div class="t" style="left:545.00px;top:854.00px;font-size:10.5px;line-height:10.5px;color:#6b6e72;letter-spacing:0.307px;">2 days ago</div>
<div class="t m2" style="left:657.06px;top:833.00px;font-size:12px;line-height:12px;color:#111;letter-spacing:0.109px;">11/04/2027 10:19</div>
<div class="t" style="left:657.31px;top:854.00px;font-size:10.5px;line-height:10.5px;color:#6b6e72;letter-spacing:0.338px;">in 362 days</div>
<div class="t" style="left:769.24px;top:842.00px;font-size:13px;line-height:13px;color:#c3c5c9;letter-spacing:1.067px;">None</div>
<div class="t m2" style="left:862.00px;top:842.00px;font-size:13px;line-height:13px;color:#111;">0</div>
<div class="t m2" style="left:983.70px;top:842.00px;font-size:13px;line-height:13px;color:#111;">1</div>
<div class="t m2" style="left:1117.64px;top:842.00px;font-size:13px;line-height:13px;color:#45afbc;letter-spacing:0.687px;">Buy 5 coffees get 1 free</div>
<div class="t" style="left:1281.44px;top:842.00px;font-size:13px;line-height:13px;color:#c3c5c9;letter-spacing:0.900px;">None</div>
<div class="box" style="left:275px;top:875px;width:1141px;height:1px;background:#e2e3e6"></div>
</div></body></html>
